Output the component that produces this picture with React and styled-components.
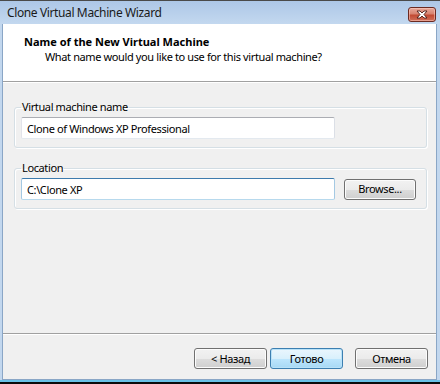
import styled, { createGlobalStyle } from "styled-components";

const GlobalStyle = createGlobalStyle`
  html, body {
    margin: 0;
    padding: 0;
    background: #111;
  }
  * { box-sizing: border-box; }
`;

const Window = styled.div`
  width: 440px;
  height: 384px;
  display: flex;
  flex-direction: column;
  background: #c2d7ee;
  border-top: 1px solid #4a4a4a;
  border-bottom: 2px solid #0c0c0c;
  font-family: "Noto Sans", "DejaVu Sans", sans-serif;
  font-size: 11px;
  letter-spacing: -0.38px;
  color: #000;
`;

const TitleBar = styled.div`
  height: 23px;
  flex: none;
  display: flex;
  align-items: center;
  justify-content: space-between;
  padding: 0 4px 0 7px;
  background: linear-gradient(#adc7e7, #c3d8ef);
`;

const Title = styled.span`
  font-size: 12px;
  color: #1a1a1a;
`;

const CloseButton = styled.div`
  width: 28px;
  height: 15px;
  margin-top: 3px;
  display: flex;
  align-items: center;
  justify-content: center;
  border: 1px solid #6b2a22;
  border-radius: 3px;
  background: linear-gradient(#e7a99b 0%, #d88370 45%, #c24a33 55%, #d0705a 100%);
  box-shadow: inset 0 0 0 1px rgba(255, 210, 200, 0.5);
`;

const Frame = styled.div`
  flex: 1;
  display: flex;
  padding: 0 3px 0 2px;
  border-bottom: 2px solid #69c2e8;
`;

const Client = styled.div`
  flex: 1;
  display: flex;
  flex-direction: column;
  background: #f0f0f0;
  border-left: 1px solid #8aa6c6;
  border-right: 1px solid #8aa6c6;
  border-bottom: 1px solid #8aa6c6;
`;

const Header = styled.div`
  height: 58px;
  flex: none;
  background: #fff;
  padding: 10px 0 0 21px;
  border-bottom: 1px solid #a0a0a0;
  box-shadow: 0 1px 0 #fff;
`;

const HeaderTitle = styled.div`
  font-weight: bold;
  letter-spacing: 0;
  line-height: 15px;
`;

const HeaderSub = styled.div`
  line-height: 15px;
  padding-left: 21px;
`;

const Body = styled.div`
  flex: 1;
  display: flex;
  flex-direction: column;
  gap: 12px;
  padding: 17px 9px 0 11px;
`;

const Group = styled.fieldset`
  margin: 0;
  padding: 2px 6px 8px 6px;
  border: 1px solid #d5dfe5;
  border-radius: 3px;
  box-shadow: 1px 1px 0 #fff, inset 1px 1px 0 #fff;
  display: flex;
  align-items: center;
  gap: 9px;
`;

const Legend = styled.legend`
  padding: 0 1px;
  line-height: 16px;
`;

const TextBox = styled.input`
  width: 314px;
  height: 22px;
  padding: 0 5px;
  font: inherit;
  letter-spacing: inherit;
  color: #000;
  background: #fff;
  border: 1px solid;
  border-color: ${(p) =>
    p.$focused ? "#3d7bad #a4c9e3 #b7d9ed #a4c9e3" : "#abadb3 #dbdfe6 #e3e9ef #e2e3ea"};
  border-radius: 2px;
  outline: none;
`;

const Button = styled.button`
  width: ${(p) => p.$width || 73}px;
  height: 21px;
  padding: 0 0 1px;
  font: inherit;
  letter-spacing: inherit;
  color: #000;
  border: 1px solid ${(p) => (p.$default ? "#3c7fb1" : "#707070")};
  border-radius: 3px;
  background: ${(p) =>
    p.$default
      ? "linear-gradient(#eaf6fd 0%, #d9f0fc 50%, #bee6fd 50%, #a7d9f5 100%)"
      : "linear-gradient(#f2f2f2 0%, #ebebeb 50%, #dddddd 50%, #cfcfcf 100%)"};
  box-shadow: inset 0 0 0 1px ${(p) => (p.$default ? "#b9e2f8" : "#fcfcfc")};
`;

const Footer = styled.div`
  height: 46px;
  flex: none;
  display: flex;
  justify-content: flex-end;
  align-items: flex-start;
  padding: 14px 8px 0 0;
  border-top: 1px solid #a0a0a0;
  box-shadow: inset 0 1px 0 #fff;
`;

const NavPair = styled.div`
  display: flex;
  gap: 3px;
  margin-right: 12px;
`;

const CloseIcon = () => (
  <svg width="12" height="9" viewBox="0 0 12 9">
    <path
      d="M1 1h3l2 2 2-2h3L8 4.5 11 8H8L6 6 4 8H1l3-3.5z"
      fill="#fff"
      stroke="#4a1a14"
      strokeWidth="0.9"
      strokeLinejoin="round"
    />
  </svg>
);

export default function App() {
  return (
    <>
      <GlobalStyle />
      <Window>
        <TitleBar>
          <Title>Clone Virtual Machine Wizard</Title>
          <CloseButton>
            <CloseIcon />
          </CloseButton>
        </TitleBar>
        <Frame>
          <Client>
            <Header>
              <HeaderTitle>Name of the New Virtual Machine</HeaderTitle>
              <HeaderSub>What name would you like to use for this virtual machine?</HeaderSub>
            </Header>
            <Body>
              <Group>
                <Legend>Virtual machine name</Legend>
                <TextBox defaultValue="Clone of Windows XP Professional" />
              </Group>
              <Group>
                <Legend>Location</Legend>
                <TextBox $focused defaultValue="C:\Clone XP" />
                <Button $width={72}>Browse...</Button>
              </Group>
            </Body>
            <Footer>
              <NavPair>
                <Button>&lt; Назад</Button>
                <Button $default>Готово</Button>
              </NavPair>
              <Button>Отмена</Button>
            </Footer>
          </Client>
        </Frame>
      </Window>
    </>
  );
}
